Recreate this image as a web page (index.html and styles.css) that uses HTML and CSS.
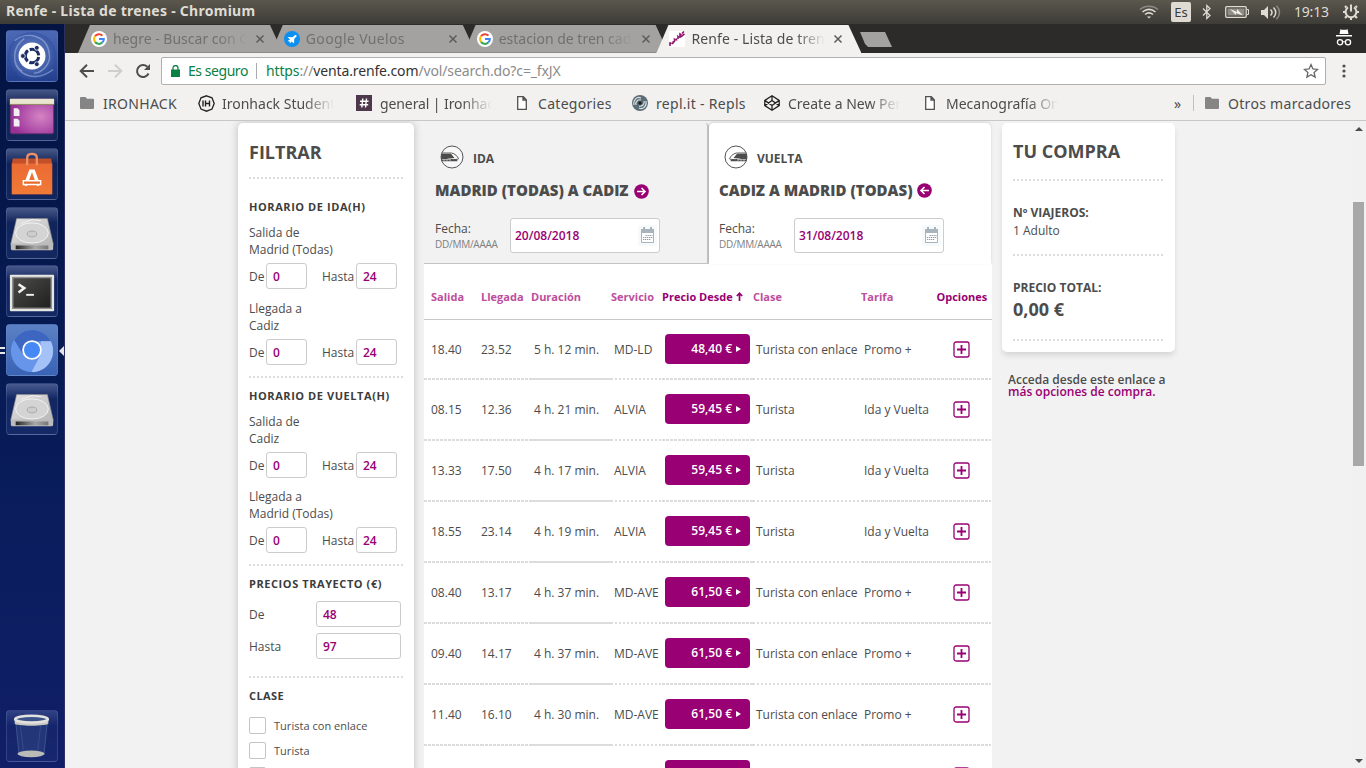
FILE: index.html
```html
<!DOCTYPE html>
<html lang="es">
<head>
<meta charset="utf-8">
<title>Renfe - Lista de trenes</title>
<link rel="stylesheet" href="styles.css">
</head>
<body>
<svg class="defs" aria-hidden="true">
  <defs>
    <linearGradient id="gMetal" x1="0" y1="0" x2="1" y2="1"><stop offset="0" stop-color="#e4e4e4"/><stop offset="1" stop-color="#b4b4b4"/></linearGradient>
    <linearGradient id="gFront" x1="0" x2="1"><stop offset="0" stop-color="#222"/><stop offset=".6" stop-color="#aaa"/><stop offset="1" stop-color="#777"/></linearGradient>
    <linearGradient id="gTerm" x1="0" y1="0" x2="1" y2="1"><stop offset="0" stop-color="#4c4c4a"/><stop offset="1" stop-color="#1f1f1f"/></linearGradient>
    <linearGradient id="gBag" x1="0" y1="0" x2="0" y2="1"><stop offset="0" stop-color="#ea6a33"/><stop offset="1" stop-color="#f27a36"/></linearGradient>
    <radialGradient id="gDesk" cx=".7" cy=".5" r=".7"><stop offset="0" stop-color="#d583c4"/><stop offset="1" stop-color="#983098"/></radialGradient>
    <radialGradient id="gDash"><stop offset="0" stop-color="#9fb4e4"/><stop offset="1" stop-color="#2c4c9e"/></radialGradient>
  </defs>
  <symbol id="google" viewBox="0 0 16 16"><circle cx="8" cy="8" r="8" fill="#fff"/><g fill="none" stroke-width="2"><path d="M4 5.2A4.9 4.9 0 0 1 11.5 4.6" stroke="#ea4335"/><path d="M4 5.2A4.9 4.9 0 0 0 4 10.8" stroke="#fbbc05"/><path d="M4 10.8A4.9 4.9 0 0 0 11.3 11.6" stroke="#34a853"/><path d="M8 8h4.9A4.9 4.9 0 0 1 11.3 11.6" stroke="#4285f4"/></g></symbol>
  <symbol id="close" viewBox="0 0 10 10"><path d="M1.500 1.500l7 7M8.500 1.500l-7 7" stroke="currentColor" stroke-width="1.500"/></symbol>
  <symbol id="folder" viewBox="0 0 14 12"><path d="M1 0h4.5L7 1.7h6a1 1 0 0 1 1 1V11a1 1 0 0 1-1 1H1a1 1 0 0 1-1-1V1a1 1 0 0 1 1-1z" fill="#858585"/></symbol>
  <symbol id="page" viewBox="0 0 10 14"><path d="M.7.7h5.6l3 3v9.6H.7zM6 .7V4h3.3" fill="#fff" stroke="#505050" stroke-width="1.3"/></symbol>
  <symbol id="train" viewBox="0 0 24 24"><circle cx="12" cy="12" r="11" fill="#fff" fill-opacity=".4" stroke="#54545c" stroke-width="1"/><path d="M1.300 8.800H11l3.500 4.200q-3 .6-6 .4l-1.500.6H1.100z" fill="#4c4c4c"/><path d="M1.300 14.500h16v1.700H2z" fill="#4c4c4c"/><path d="M2 8h9.500c3.500.6 6 3.200 7 5.800-1 .8-3 .7-8 .7" fill="none" stroke="#4c4c4c" stroke-width=".9"/><path d="M4 14.200v2M7 14.200v2M10 14.200v2" stroke="#f2f2f2" stroke-width=".6"/></symbol>
  <symbol id="calendar" viewBox="0 0 19 21"><path d="M0 0h19v21H0z" fill="#f7fafb"/><path d="M3.5 5.500h12v12h-12z" fill="#fff" stroke="#a9b3bc"/><path d="M3 4h13v4H3z" fill="#a9b3bc"/><path d="M6 2v3M13 2v3" stroke="#a9b3bc" stroke-width="2"/><path d="M7.500 10.500h7M5 12.500h9.500M5 14.500h7.500" stroke="#8d99a4" stroke-width="1.2" stroke-dasharray="1.300 .7"/></symbol>
  <symbol id="plus" viewBox="0 0 17 17"><rect x="1" y="1" width="15" height="15" rx="2" fill="#fff" stroke="#980073" stroke-width="1.3"/><path d="M8.500 4v9M4 8.500h9" stroke="#980073" stroke-width="1.8"/></symbol>
  <symbol id="disk" viewBox="0 0 52 52"><path d="M10 11h32l6 26-1 6H5l-1-6z" fill="url(#gMetal)" stroke="#8c8c8c" stroke-width=".6"/><path d="M4 37h44v5a2 2 0 0 1-2 2H6a2 2 0 0 1-2-2z" fill="#bbb"/><path d="M9 39h34v4H9z" fill="url(#gFront)"/><ellipse cx="26" cy="26" rx="17" ry="10.500" fill="#d4d4d4" stroke="#f1f1f1"/><ellipse cx="26" cy="27" rx="5" ry="3" fill="#ccc" stroke="#aaa"/><path d="M15 16l11-4 9 1" fill="none" stroke="#f4f4f4"/></symbol>
</svg>

<header class="panel">
  <span class="panel-title">Renfe - Lista de trenes - Chromium</span>
  <div class="tray">
    <svg width="20" height="14" viewBox="0 0 20 14" fill="none" stroke="#dfdbd2" stroke-width="1.6"><path d="M1 4.500C6 .2 14 .2 19 4.500" stroke="#8b8982"/><path d="M3.500 7c4-3.300 9-3.300 13 0M6 9.500c2.500-2 5.500-2 8 0"/><path d="M8 11.500h4l-2 2z" fill="#dfdbd2" stroke="none"/></svg>
    <span class="lang">Es</span>
    <svg class="bt" width="10" height="16" viewBox="0 0 10 16" fill="none" stroke="#dfdbd2" stroke-width="1.3"><path d="M1 4.500l7 7-3.200 3V1.500L8 4.500l-7 7"/></svg>
    <svg class="bat" width="24" height="12" viewBox="0 0 24 12"><rect x=".7" y=".7" width="20.500" height="10.600" rx="1" fill="none" stroke="#dfdbd2" stroke-width="1.3"/><path d="M2.500 2.500h17v7h-17z" fill="#8f8d86"/><path d="M22 3.500h1.500v5H22" fill="none" stroke="#dfdbd2"/><path d="M5 3l7 3V3l6 6.500-7-2.500v2z" fill="#f3efe8"/></svg>
    <svg class="vol" width="20" height="15" viewBox="0 0 20 15"><path d="M0 5h3l4-4v13l-4-4H0z" fill="#dfdbd2"/><path d="M9.500 4.500c2 2 2 4 0 6M12.500 2.500c3 3 3 7 0 10" fill="none" stroke="#dfdbd2" stroke-width="1.5"/><path d="M15.500.8c4 4 4 9.500 0 13.500" fill="none" stroke="#8b8982" stroke-width="1.500"/></svg>
    <span class="clock">19:13</span>
    <svg class="gear" width="16" height="16" viewBox="0 0 16 16" fill="none" stroke="#dfdbd2"><path d="M5 3.300a5.400 5.400 0 1 0 6 0" stroke-width="2"/><path d="M8 .5v7" stroke-width="2"/><path d="M3.500 3.500L2 2M12.500 3.500L14 2M2.500 8H0M13.500 8H16M4 12l-2 2M12 12l2 2M8 13.500V16" stroke-width="2.200"/></svg>
  </div>
</header>

<div class="desktop">
  <nav class="launcher">
    <div class="tile dash"><svg viewBox="0 0 52 52"><circle cx="26" cy="26" r="25" fill="url(#gDash)" opacity=".55"/><path d="M8 10c12-10 34-6 36 14 2 10-8 20-16 20M8 28c0 18 22 26 40 12M18 8C6 16 4 34 16 42" fill="none" stroke="#a9b9e2" stroke-opacity=".55" stroke-width="1.500"/><circle cx="26" cy="26" r="14" fill="#fff"/><circle cx="26" cy="26" r="7" fill="none" stroke="#1b2c63" stroke-width="3.200" stroke-dasharray="12.660 2" stroke-dashoffset="-1"/><g fill="#1b2c63" stroke="#fff" stroke-width=".8"><circle cx="16.500" cy="26" r="2.500"/><circle cx="31" cy="17.500" r="2.500"/><circle cx="31" cy="34.500" r="2.500"/></g></svg></div>
    <div class="tile"><svg viewBox="0 0 52 52"><rect x="3.500" y="9.500" width="45" height="36" rx="2" fill="url(#gDesk)" stroke="#66316f"/><path d="M3 9h46v6H3z" fill="#e9e5cf"/><path d="M3 15h46" stroke="#8c875f"/><path d="M7 19h4l2 2v6H7zM7 30h4l2 2v6H7z" fill="#f3eef3"/></svg></div>
    <div class="tile"><svg viewBox="0 0 52 52"><path d="M6 10h40l1 6v31H5V16z" fill="#c4502a"/><path d="M5 15h42v32H5z" fill="url(#gBag)"/><path d="M21 17V9q0-4 5-4t5 4v8" fill="none" stroke="#ef9168" stroke-width="2.400"/><path d="M19 38l5.500-15h3L33 38" fill="none" stroke="#fff" stroke-width="3.600"/><path d="M17 33h18v4H17z" fill="#e66a2c" stroke="#fff" stroke-width="1.500"/></svg></div>
    <div class="tile"><svg viewBox="0 0 52 52"><use href="#disk"/></svg></div>
    <div class="tile"><svg viewBox="0 0 52 52"><rect x="3" y="9" width="46" height="38" rx="1" fill="#e6e6e4"/><rect x="6" y="12" width="40" height="32" fill="url(#gTerm)" stroke="#8d8d8b" stroke-width="1.500"/><path d="M12 19l6 4-6 4.500" fill="none" stroke="#f2f2f2" stroke-width="2.600"/><path d="M20 30h8" stroke="#f2f2f2" stroke-width="2"/></svg></div>
    <div class="tile active"><svg viewBox="0 0 52 52"><circle cx="26" cy="27" r="22" fill="#6795e9"/><path d="M7.500 15.500A22 22 0 0 1 45.500 17H26l-9 14z" fill="#3c66bf"/><path d="M45.500 17A22 22 0 0 1 25.500 49L35 31V17z" fill="#a4c2f8"/><circle cx="26" cy="26" r="10.200" fill="#fff"/><circle cx="26" cy="26" r="8.300" fill="#4688f4"/></svg><i class="pips"></i><i class="pointer"></i></div>
    <div class="tile"><svg viewBox="0 0 52 52"><use href="#disk"/></svg></div>
    <div class="tile trash"><svg viewBox="0 0 52 52"><path d="M9 11h33l-3.500 34h-26z" fill="#38518d" fill-opacity=".4" stroke="#7187bb" stroke-opacity=".4"/><ellipse cx="25" cy="44.500" rx="14" ry="3.500" fill="#b9bbb6"/><path d="M14 15l3 26M35 15l-3 26" stroke="#8fa1cb" stroke-opacity=".2"/><path d="M8 9v4c0 3 35 3 35 0V9z" fill="#c9cac6"/><ellipse cx="25.500" cy="8.500" rx="17" ry="3.500" fill="#3c5288" stroke="#e2e2de" stroke-width="2.600"/></svg></div>
  </nav>

  <div class="browser">
    <div class="tabstrip">
      <div class="tab"><svg class="fav"><use href="#google"/></svg><span class="tab-text t1">hegre - Buscar con Google</span><svg class="x"><use href="#close"/></svg></div>
      <div class="tab"><svg class="fav" viewBox="0 0 16 16"><circle cx="8" cy="8" r="8" fill="#0b8ff0"/><path d="M3.500 10l2 .5.500 2 1.500-2 2.500 2 .3-4.700 2.200-2.300c.6-1-.4-2-1.400-1.400L8.500 6.200 3.500 6l2.500 2.600z" fill="#fff"/></svg><span class="tab-text t2">Google Vuelos</span><svg class="x"><use href="#close"/></svg></div>
      <div class="tab"><svg class="fav"><use href="#google"/></svg><span class="tab-text t3">estacion de tren cadiz</span><svg class="x"><use href="#close"/></svg></div>
      <div class="tab current"><svg class="fav" viewBox="0 0 16 16"><path d="M0 0h16v16H0z" fill="#fff"/><path d="M1 15l0-3 1.500.3M3 13l1.500-1.500-1-1M5.500 11V8.500l1 1M8 9.500L7 7.500M9 8V5.500l1 1M11 7V3l1.500 1M12 6l2-2M13 2.500L15 .5M14 4l1.500-1" fill="none" stroke="#8d126c" stroke-width="1.600"/></svg><span class="tab-text t4">Renfe - Lista de trenes</span><svg class="x"><use href="#close"/></svg></div>
      <div class="newtab"></div>
      <svg class="incog" width="16" height="17" viewBox="0 0 16 17"><path d="M4.500 0l1 .7h5L11.500 0l1 5h-9zM0 6h16v1.600H0z" fill="#fff"/><path d="M7 13q1-1 2 0" stroke="#fff" fill="none"/><g fill="none" stroke="#fff" stroke-width="1.300"><circle cx="4" cy="13.300" r="2.600"/><circle cx="12" cy="13.300" r="2.600"/></g></svg>
    </div>

    <div class="toolbar">
      <svg class="nav" viewBox="0 0 16 16"><path d="M15 8H2M8 1.700L1.700 8 8 14.300" fill="none" stroke="#4d4d4d" stroke-width="2"/></svg>
      <svg class="nav" viewBox="0 0 16 16"><path d="M1 8h13M8 1.700L14.300 8 8 14.300" fill="none" stroke="#cfcecd" stroke-width="2"/></svg>
      <svg class="nav" viewBox="0 0 16 16"><path d="M13.500 10.500A6 6 0 1 1 12.300 3.800" fill="none" stroke="#4d4d4d" stroke-width="2"/><path d="M15 1v6H9z" fill="#4d4d4d"/></svg>
      <div class="omnibox">
        <svg width="9" height="12" viewBox="0 0 9 12"><path d="M0 4.500h9V12H0z" fill="#0b8043"/><path d="M2 5V3a2.500 2.500 0 0 1 5 0v2" fill="none" stroke="#0b8043" stroke-width="1.300"/></svg>
        <span class="secure">Es seguro</span>
        <span class="url"><b>https</b>://<em>venta.renfe.com</em>/vol/search.do?c=_fxJX</span>
        <svg class="star" width="16" height="16" viewBox="0 0 16 16"><path d="M8 1.600l1.900 4.300 4.700.5-3.500 3.100 1 4.600L8 11.700l-4.100 2.400 1-4.600L1.400 6.400l4.700-.5z" fill="none" stroke="#666" stroke-width="1.300"/></svg>
      </div>
      <svg class="dots" width="4" height="14" viewBox="0 0 4 14" fill="#505050"><circle cx="2" cy="2" r="1.600"/><circle cx="2" cy="7" r="1.600"/><circle cx="2" cy="12" r="1.600"/></svg>
    </div>

    <div class="bookmarks">
      <svg width="14" height="12"><use href="#folder"/></svg><span class="wide">IRONHACK</span>
      <svg width="17" height="17" viewBox="0 0 17 17" fill="none" stroke="#222"><path d="M8.500.8l5.500 2 2.200 5.700L14 14l-5.500 2.200L3 14 .8 8.500 3 2.800z" stroke-width="1.300"/><path d="M5 5.500v6M7.500 5.500v6M11.500 5.500v6M7.500 8.500h4" stroke-width="1.400"/></svg><span class="fade">Ironhack Student Portal</span>
      <svg width="16" height="16" viewBox="0 0 16 16"><path d="M0 0h16v16H0z" fill="#4d394b"/><path d="M6.800 3.500l-1 9M10.500 3.500l-1 9M4 6.300h8.500M3.700 9.700h8.500" stroke="#fff" stroke-width="1.400"/></svg><span class="fade tight">general | Ironhack</span>
      <svg width="10" height="14"><use href="#page"/></svg><span class="wide">Categories</span>
      <svg width="16" height="16" viewBox="0 0 16 16"><circle cx="8" cy="8" r="8" fill="#5a6d76"/><path d="M2 10C1 5 5 1 9 3M14 6c1 5-3 9-7 7M4 10c-1-3 2-6 5-5M12 6c1 3-2 6-5 5" fill="none" stroke="#dce4e7" stroke-width="1.100"/><circle cx="8" cy="8" r="1.800" fill="#222"/></svg><span class="wide">repl.it - Repls</span>
      <svg width="16" height="16" viewBox="0 0 16 16" fill="none" stroke="#222" stroke-width="1.300"><path d="M8 .8l7.200 4.600v5.200L8 15.200.8 10.600V5.400zM8 .8V5.500M8 10.500v4.700M.8 5.400L8 10.500l7.200-5.100M.8 10.600L8 5.500l7.200 5.100"/></svg><span class="fade">Create a New Pen</span>
      <svg width="10" height="14"><use href="#page"/></svg><span class="fade">Mecanografía Online</span>
      <span class="more">»</span><i class="bm-sep"></i>
      <svg width="14" height="12"><use href="#folder"/></svg><span class="wide">Otros marcadores</span>
    </div>

    <div class="viewport">
      <main class="page">
        <aside class="card filter">
          <h2>FILTRAR</h2>
          <hr class="dot">
          <section class="hours first">
            <h3>HORARIO DE IDA(H)</h3>
            <p>Salida de<br>Madrid (Todas)</p>
            <div class="range"><label>De</label><span class="field">0</span><label>Hasta</label><span class="field">24</span></div>
            <p class="second">Llegada a<br>Cadiz</p>
            <div class="range"><label>De</label><span class="field">0</span><label>Hasta</label><span class="field">24</span></div>
          </section>
          <hr class="dot">
          <section class="hours">
            <h3>HORARIO DE VUELTA(H)</h3>
            <p>Salida de<br>Cadiz</p>
            <div class="range"><label>De</label><span class="field">0</span><label>Hasta</label><span class="field">24</span></div>
            <p class="second">Llegada a<br>Madrid (Todas)</p>
            <div class="range"><label>De</label><span class="field">0</span><label>Hasta</label><span class="field">24</span></div>
          </section>
          <hr class="dot">
          <section class="prices">
            <h3>PRECIOS TRAYECTO (€)</h3>
            <div><label>De</label><span class="field">48</span></div>
            <div><label>Hasta</label><span class="field">97</span></div>
          </section>
          <hr class="dot">
          <section class="classes">
            <h3>CLASE</h3>
            <div><i></i>Turista con enlace</div>
            <div><i></i>Turista</div>
            <div><i></i></div>
          </section>
        </aside>

        <section class="results">
          <div class="legs">
            <div class="leg off">
              <div class="way"><svg width="24" height="24"><use href="#train"/></svg><span>IDA</span></div>
              <h1><span>MADRID (TODAS) A CADIZ</span><svg width="15" height="15" viewBox="0 0 15 15"><circle cx="7.500" cy="7.500" r="7.300" fill="#980073"/><path d="M3 7.500h8M7.500 4l3.500 3.500L7.500 11" fill="none" stroke="#fff" stroke-width="1.600"/></svg></h1>
              <div class="date"><div><b>Fecha:</b><small>DD/MM/AAAA</small></div><span class="field">20/08/2018<svg width="19" height="21"><use href="#calendar"/></svg></span></div>
            </div>
            <div class="leg on">
              <div class="way"><svg class="flip" width="24" height="24"><use href="#train"/></svg><span>VUELTA</span></div>
              <h1><span>CADIZ A MADRID (TODAS)</span><svg width="15" height="15" viewBox="0 0 15 15"><circle cx="7.500" cy="7.500" r="7.300" fill="#980073"/><path d="M12 7.500H4M7.500 4L4 7.500 7.500 11" fill="none" stroke="#fff" stroke-width="1.600"/></svg></h1>
              <div class="date"><div><b>Fecha:</b><small>DD/MM/AAAA</small></div><span class="field">31/08/2018<svg width="19" height="21"><use href="#calendar"/></svg></span></div>
            </div>
          </div>
          <div class="table">
            <div class="tr head"><span>Salida</span><span>Llegada</span><span>Duración</span><span>Servicio</span><span class="strong">Precio Desde <svg width="7" height="9" viewBox="0 0 7 9"><path d="M3.500 9V1.500M.8 4l2.700-2.700L6.200 4" fill="none" stroke="#980073" stroke-width="1.700"/></svg></span><span>Clase</span><span>Tarifa</span><span class="strong">Opciones</span></div>
            <div class="tr row0"><span>18.40</span><span>23.52</span><span>5 h. 12 min.</span><span>MD-LD</span><span><a class="price">48,40 €</a></span><span>Turista con enlace</span><span>Promo +</span><span><svg><use href="#plus"/></svg></span></div>
            <div class="tr"><span>08.15</span><span>12.36</span><span>4 h. 21 min.</span><span>ALVIA</span><span><a class="price">59,45 €</a></span><span>Turista</span><span>Ida y Vuelta</span><span><svg><use href="#plus"/></svg></span></div>
            <div class="tr"><span>13.33</span><span>17.50</span><span>4 h. 17 min.</span><span>ALVIA</span><span><a class="price">59,45 €</a></span><span>Turista</span><span>Ida y Vuelta</span><span><svg><use href="#plus"/></svg></span></div>
            <div class="tr"><span>18.55</span><span>23.14</span><span>4 h. 19 min.</span><span>ALVIA</span><span><a class="price">59,45 €</a></span><span>Turista</span><span>Ida y Vuelta</span><span><svg><use href="#plus"/></svg></span></div>
            <div class="tr"><span>08.40</span><span>13.17</span><span>4 h. 37 min.</span><span>MD-AVE</span><span><a class="price">61,50 €</a></span><span>Turista con enlace</span><span>Promo +</span><span><svg><use href="#plus"/></svg></span></div>
            <div class="tr"><span>09.40</span><span>14.17</span><span>4 h. 37 min.</span><span>MD-AVE</span><span><a class="price">61,50 €</a></span><span>Turista con enlace</span><span>Promo +</span><span><svg><use href="#plus"/></svg></span></div>
            <div class="tr"><span>11.40</span><span>16.10</span><span>4 h. 30 min.</span><span>MD-AVE</span><span><a class="price">61,50 €</a></span><span>Turista con enlace</span><span>Promo +</span><span><svg><use href="#plus"/></svg></span></div>
            <div class="tr"><span></span><span></span><span></span><span></span><span><a class="price"></a></span><span></span><span></span><span><svg><use href="#plus"/></svg></span></div>
          </div>
        </section>

        <aside class="side">
          <div class="card cart">
            <h2>TU COMPRA</h2>
            <hr class="dot">
            <div class="travellers"><b>Nº VIAJEROS:</b><span>1 Adulto</span></div>
            <hr class="dot">
            <div class="total"><b>PRECIO TOTAL:</b><strong>0,00 €</strong></div>
            <hr class="dot">
          </div>
          <p class="hint">Acceda desde este enlace a<br><a>más opciones de compra.</a></p>
        </aside>
      </main>
      <div class="scrollbar"><i class="up"></i><i class="thumb"></i><i class="down"></i></div>
    </div>
  </div>
</div>
</body>
</html>
```
FILE: styles.css
```css
* { box-sizing: border-box; }
body { margin: 0; width: 1366px; height: 768px; overflow: hidden; font-family: "Open Sans", sans-serif; font-size: 12px; color: #4c4c4c; }
h1, h2, h3, p { margin: 0; }
svg { display: block; flex: none; }
.defs { position: absolute; width: 0; height: 0; }

/* System panel */
.panel { height: 24px; display: flex; align-items: center; justify-content: space-between; padding: 0 7px 0 6px; background: linear-gradient(#5b574d, #3d3c37); color: #dfdbd2; font-family: "Noto Sans", sans-serif; }
.panel-title { padding-bottom: 2px; font-size: 14px; line-height: 20px; font-weight: 700; letter-spacing: .27px; white-space: nowrap; }
.tray { display: flex; align-items: center; }
.lang { width: 20px; height: 20px; margin-left: 12px; border-radius: 2px; background: #dfdbd2; color: #3c3b37; font-size: 13px; line-height: 20px; text-align: center; }
.bt { margin-left: 11px; }
.bat { margin-left: 13px; }
.vol { margin-left: 12px; }
.clock { width: 36px; margin-left: 13px; padding-bottom: 1px; font-size: 14px; line-height: 20px; letter-spacing: -.2px; }
.gear { margin-left: 13px; }

.desktop { display: flex; height: 744px; }

/* Launcher */
.launcher { width: 65px; flex: none; display: flex; flex-direction: column; gap: 7px; padding: 6px 0 6px 6px; background: linear-gradient(#031442, #071b56 50%, #101f68); border-right: 1px solid #2b2f63; }
.tile { position: relative; width: 52px; height: 52px; border-radius: 4px; background: linear-gradient(rgba(180,195,235,.38), rgba(60,85,150,.2) 30%, rgba(70,95,160,.22)); border: 1px solid rgba(130,150,205,.25); }
.tile svg { width: 50px; height: 50px; }
.tile:nth-child(5) { margin-top: -1px; }
.tile.dash { background: linear-gradient(#4d69b6, #23408f); }
.tile.active { background: linear-gradient(#5b80c4, #3963b4); }
.tile.trash { margin-top: auto; background: linear-gradient(rgba(120,140,200,.32), rgba(60,85,150,.12) 30%, rgba(70,95,160,.14)); }
.pips { position: absolute; left: -7px; top: 22px; width: 5px; height: 7px; border: solid #e8e8e8; border-width: 2px 0; }
.pointer { position: absolute; right: -7px; top: 21px; border: 5px solid transparent; border-left: 0; border-right-color: #e3e3e8; }

/* Tabs */
.browser { flex: 1; min-width: 0; display: flex; flex-direction: column; font-family: "Noto Sans", sans-serif; }
.tabstrip { height: 29px; display: flex; align-items: flex-start; padding: 1px 14px 0 13px; background: #2c2b29; }
.tab { width: 205px; height: 28px; margin-right: -12.200px; display: flex; align-items: center; padding-left: 13px; clip-path: polygon(0 100%, 12px 0, 192px 0, 100% 100%); background: #a3a2a0; border-bottom: 1px solid #8b8a88; color: #70706e; }
.tab.current { background: #f2f1f0; border-color: #f2f1f0; color: #4c4c4c; }
.fav { width: 16px; height: 16px; }
.tab-text { width: 134px; margin-left: 6px; font-size: 14px; white-space: nowrap; overflow: hidden; -webkit-mask-image: linear-gradient(90deg, #000 105px, transparent 134px); mask-image: linear-gradient(90deg, #000 105px, transparent 134px); }
.t2 { letter-spacing: .35px; }
.t4 { letter-spacing: .1px; }
.x { width: 10px; height: 10px; margin-left: 8px; color: #5c5c5a; }
.newtab { width: 32px; height: 15px; margin: 7px 0 0 10.800px; background: #a3a2a0; clip-path: polygon(0 0, 25px 0, 100% 100%, 8px 100%, 5px 80%); }
.incog { margin: 4px 0 0 auto; }

/* Toolbar */
.toolbar { height: 36px; display: flex; align-items: center; padding-left: 14px; background: #f2f1f0; }
.nav { width: 16px; height: 16px; margin-right: 12px; }
.omnibox { width: 1165px; height: 28px; margin-left: -2px; display: flex; align-items: center; padding: 0 6px 0 9px; background: #fff; border: 1px solid #b0afae; border-radius: 2px; font-size: 14px; white-space: nowrap; }
.secure { width: 69px; margin-left: 8px; border-right: 1px solid #ababab; line-height: 16px; color: #0b8043; letter-spacing: -.45px; }
.url { margin-left: 9px; padding-bottom: 1px; color: #8b8b8b; letter-spacing: -.13px; }
.url b { font-weight: 400; color: #0b8043; }
.url em { font-style: normal; color: #333; }
.star { margin-left: auto; }
.dots { margin-left: 16px; }

/* Bookmarks */
.bookmarks { height: 32px; display: grid; align-items: center; justify-items: start; grid-template-columns: 23px 95px 24px 134px 24px 137px 21px 94px 24px 108px 24px 137px 21px 228px 19px 12px 23px 124px; padding: 0 0 3px 15px; background: #f2f1f0; border-bottom: 1px solid #c8c7c6; font-size: 14px; white-space: nowrap; color: #4c4c4c; }
.wide { letter-spacing: .3px; }
.tight { letter-spacing: -.1px; }
.fade { width: 112px; overflow: hidden; -webkit-mask-image: linear-gradient(90deg, #000 82px, transparent 112px); mask-image: linear-gradient(90deg, #000 82px, transparent 112px); }
.bm-sep { width: 1px; height: 16px; background: #c0c0c0; }

/* Page */
.viewport { flex: 1; min-height: 0; display: flex; background: #f2f2f2; font-family: "Open Sans", sans-serif; }
.page { width: 1286px; height: 647px; overflow: hidden; display: flex; align-items: flex-start; gap: 10px; padding: 2px 0 0 173px; }
.scrollbar { width: 15px; display: flex; flex-direction: column; align-items: center; background: #f1f1f1; }
.up, .down { border: 4px solid transparent; }
.up { margin-top: 6px; border-top: 0; border-bottom-color: #4c4c4c; }
.down { margin: auto 0 5px; border-bottom: 0; border-top-color: #4c4c4c; }
.thumb { width: 11px; height: 264px; margin-top: 71px; background: #a8a8a8; }
.card { background: #fff; border-radius: 5px; }
.dot { height: 2px; margin: 0; border: 0; background: repeating-linear-gradient(90deg, #dcdcdc 0 2px, transparent 2px 4px); }
.field { display: flex; align-items: center; height: 26px; padding-left: 6px; border: 1px solid #ccc; border-radius: 3px; background: #fff; color: #980073; font-size: 12px; font-weight: 600; }
h2 { font-size: 18px; line-height: 20px; font-weight: 700; color: #4c4c4c; }
h3 { font-size: 11px; line-height: 16px; font-weight: 700; letter-spacing: .57px; color: #3c3c3c; white-space: nowrap; }

.filter { width: 176px; height: 680px; padding: 19px 11px 0; box-shadow: 0 0 8px rgba(0,0,0,.22); }
.filter h2 { margin-bottom: 15px; }
.hours { padding: 10px 0 11px; }
.hours.first { padding-top: 20px; }
.hours p { margin: 9px 0 5px; line-height: 17px; }
.hours .second { margin: 10px 0 5px; }
.first .second { margin-top: 11px; }
.range { display: grid; grid-template-columns: 17px 56px 34px 41px; align-items: center; }
.range .field { width: 41px; }
.prices { padding: 10px 0 17px; }
.prices h3 { margin-bottom: 9px; }
.prices div { display: flex; align-items: center; justify-content: space-between; margin: 0 2px 6px 0; }
.prices div:last-child { margin-bottom: 0; }
.prices .field { width: 85px; height: 26px; }
.classes { padding-top: 10px; }
.classes h3 { margin-bottom: 13px; letter-spacing: .4px; }
.classes div { display: flex; align-items: center; height: 17px; margin-bottom: 8px; font-size: 11px; letter-spacing: .03px; }
.classes i { width: 17px; height: 17px; margin-right: 8px; border: 1px solid #c4c4c4; border-radius: 2px; }

.results { width: 568px; }
.legs { display: flex; height: 141px; }
.leg { width: 282px; height: 141px; padding: 22px 0 0 10px; }
.off { width: 285px; padding-left: 11px; border: solid #c4c4c4; border-width: 0 2px 1px 0; border-top-right-radius: 4px; }
.on { background: #fff; border-radius: 5px 5px 0 0; box-shadow: 0 -1px 3px rgba(0,0,0,.12); }
.way { display: flex; align-items: center; gap: 9px; padding-left: 5px; height: 24px; font-weight: 700; }
.way span { padding-top: 2px; }
.flip { transform: scaleX(-1); }
h1 { display: flex; align-items: center; margin-top: 10px; height: 22px; font-size: 15px; font-weight: 800; white-space: nowrap; }
h1 span { width: 194px; margin-right: 5px; }
h1 svg { margin-top: 2px; }
.on h1 svg { margin: 0 0 0 -1px; }
.date { display: flex; margin-top: 17px; }
.date > div { width: 75px; padding-top: 2px; }
.date b { display: block; font-weight: 400; line-height: 17px; }
.date small { display: block; font-size: 10px; line-height: 15px; color: #808080; letter-spacing: -.25px; }
.date .field { width: 150px; height: 35px; padding: 0 2px 0 4px; justify-content: space-between; }

.table { width: 568px; background: #fff; }
.tr { display: grid; grid-template-columns: 57px 50px 80px 51px 91px 108px 72px 58px; height: 61px; white-space: nowrap; }
.tr > span { display: flex; align-items: center; padding: 0 0 2px 3px; background: repeating-linear-gradient(90deg, #dcdcdc 0 3px, transparent 3px 4px) bottom / 100% 2px no-repeat; }
.tr > span:first-child { padding-left: 7px; }
.tr > span:nth-child(2) { padding-left: 0; }
.tr > span:nth-child(3) { background: linear-gradient(#dcdcdc, #dcdcdc) bottom / 100% 2px no-repeat; }
.tr > span:nth-child(4), .tr > span:nth-child(6) { background: repeating-linear-gradient(90deg, #dcdcdc 0 2px, transparent 2px 4px) bottom / 100% 2px no-repeat; }
.tr > span:nth-child(5) { padding-bottom: 3px; }
.tr > span:last-child { padding: 0 0 3px 20px; }
.row0 { height: 60px; }
.row0 > span:nth-child(5), .row0 > span:last-child { padding-bottom: 2px; }
.tr.head { height: 56px; padding-top: 10px; border-bottom: 1px solid #c8c8c8; font-size: 11px; font-weight: 700; color: #bd4d9d; }
.tr.head > span { padding: 0; background: none; }
.tr.head > span:first-child { padding-left: 7px; }
.tr.head > span:last-child { padding-left: 3.500px; }
.tr.head .strong { color: #980073; }
.tr.head svg { width: 7px; height: 9px; margin-left: 3px; }
.tr svg { width: 17px; height: 17px; }
.price { display: flex; align-items: center; justify-content: flex-end; width: 85px; height: 30px; padding: 0 9px 1px 0; border-radius: 4px; background: #980073; color: #fff; font-weight: 600; }
.price::after { content: ""; margin: 1px 0 0 4px; border: 3px solid transparent; border-left: 5px solid #fff; border-right: 0; }

.side { width: 173px; }
.cart { height: 229px; padding: 18px 11px 0; box-shadow: 0 4px 6px -1px rgba(0,0,0,.13); }
.cart h2 { margin-bottom: 18px; }
.cart b, .cart span, .cart strong { display: block; line-height: 18px; }
.travellers { padding: 23px 0 14px; }
.total { padding: 23px 0 17px; }
.cart strong { font-size: 18px; line-height: 25px; }
.hint { margin: 22px 0 0 6px; line-height: 12px; font-weight: 600; white-space: nowrap; }
.hint a { color: #980073; }
```
